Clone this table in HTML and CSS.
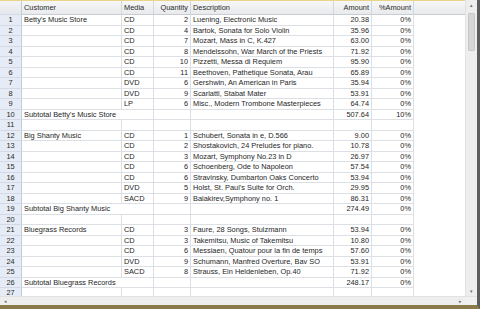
FILE: index.html
```html
<!DOCTYPE html>
<html>
<head>
<meta charset="utf-8">
<link rel="stylesheet" href="styles.css">
</head>
<body>
<div class="window">
  <div class="main">
    <div class="sheet">
      <div class="grid">
        <div class="c rn hd"></div><div class="c hd">Customer</div><div class="c hd">Media</div><div class="c hd r">Quantity</div><div class="c hd">Description</div><div class="c hd r">Amount</div><div class="c hd r">%Amount</div><div class="c hd blank"></div>

        <div class="c rn">1</div><div class="c">Betty's Music Store</div><div class="c">CD</div><div class="c r">2</div><div class="c">Luening, Electronic Music</div><div class="c r">20.38</div><div class="c r">0%</div><div class="c blank"></div>
        <div class="c rn">2</div><div class="c"></div><div class="c">CD</div><div class="c r">4</div><div class="c">Bartok, Sonata for Solo Violin</div><div class="c r">35.96</div><div class="c r">0%</div><div class="c blank"></div>
        <div class="c rn">3</div><div class="c"></div><div class="c">CD</div><div class="c r">7</div><div class="c">Mozart, Mass in C, K.427</div><div class="c r">63.00</div><div class="c r">0%</div><div class="c blank"></div>
        <div class="c rn">4</div><div class="c"></div><div class="c">CD</div><div class="c r">8</div><div class="c">Mendelssohn, War March of the Priests</div><div class="c r">71.92</div><div class="c r">0%</div><div class="c blank"></div>
        <div class="c rn">5</div><div class="c"></div><div class="c">CD</div><div class="c r">10</div><div class="c">Pizzetti, Messa di Requiem</div><div class="c r">95.90</div><div class="c r">0%</div><div class="c blank"></div>
        <div class="c rn">6</div><div class="c"></div><div class="c">CD</div><div class="c r">11</div><div class="c">Beethoven, Pathetique Sonata, Arau</div><div class="c r">65.89</div><div class="c r">0%</div><div class="c blank"></div>
        <div class="c rn">7</div><div class="c"></div><div class="c">DVD</div><div class="c r">6</div><div class="c">Gershwin, An American in Paris</div><div class="c r">35.94</div><div class="c r">0%</div><div class="c blank"></div>
        <div class="c rn">8</div><div class="c"></div><div class="c">DVD</div><div class="c r">9</div><div class="c">Scarlatti, Stabat Mater</div><div class="c r">53.91</div><div class="c r">0%</div><div class="c blank"></div>
        <div class="c rn">9</div><div class="c"></div><div class="c">LP</div><div class="c r">6</div><div class="c">Misc., Modern Trombone Masterpieces</div><div class="c r">64.74</div><div class="c r">0%</div><div class="c blank"></div>
        <div class="c rn">10</div><div class="c span2">Subtotal Betty's Music Store</div><div class="c r"></div><div class="c"></div><div class="c r">507.64</div><div class="c r">10%</div><div class="c blank"></div>
        <div class="c rn">11</div><div class="c"></div><div class="c"></div><div class="c r"></div><div class="c"></div><div class="c r"></div><div class="c r"></div><div class="c blank"></div>
        <div class="c rn">12</div><div class="c">Big Shanty Music</div><div class="c">CD</div><div class="c r">1</div><div class="c">Schubert, Sonata in e, D.566</div><div class="c r">9.00</div><div class="c r">0%</div><div class="c blank"></div>
        <div class="c rn">13</div><div class="c"></div><div class="c">CD</div><div class="c r">2</div><div class="c">Shostakovich, 24 Preludes for piano.</div><div class="c r">10.78</div><div class="c r">0%</div><div class="c blank"></div>
        <div class="c rn">14</div><div class="c"></div><div class="c">CD</div><div class="c r">3</div><div class="c">Mozart, Symphony No.23 in D</div><div class="c r">26.97</div><div class="c r">0%</div><div class="c blank"></div>
        <div class="c rn">15</div><div class="c"></div><div class="c">CD</div><div class="c r">6</div><div class="c">Schoenberg, Ode to Napoleon</div><div class="c r">57.54</div><div class="c r">0%</div><div class="c blank"></div>
        <div class="c rn">16</div><div class="c"></div><div class="c">CD</div><div class="c r">6</div><div class="c">Stravinsky, Dumbarton Oaks Concerto</div><div class="c r">53.94</div><div class="c r">0%</div><div class="c blank"></div>
        <div class="c rn">17</div><div class="c"></div><div class="c">DVD</div><div class="c r">5</div><div class="c">Holst, St. Paul's Suite for Orch.</div><div class="c r">29.95</div><div class="c r">0%</div><div class="c blank"></div>
        <div class="c rn">18</div><div class="c"></div><div class="c">SACD</div><div class="c r">9</div><div class="c">Balakirev,Symphony no. 1</div><div class="c r">86.31</div><div class="c r">0%</div><div class="c blank"></div>
        <div class="c rn">19</div><div class="c span2">Subtotal Big Shanty Music</div><div class="c r"></div><div class="c"></div><div class="c r">274.49</div><div class="c r">0%</div><div class="c blank"></div>
        <div class="c rn">20</div><div class="c"></div><div class="c"></div><div class="c r"></div><div class="c"></div><div class="c r"></div><div class="c r"></div><div class="c blank"></div>
        <div class="c rn">21</div><div class="c">Bluegrass Records</div><div class="c">CD</div><div class="c r">3</div><div class="c">Faure, 28 Songs, Stulzmann</div><div class="c r">53.94</div><div class="c r">0%</div><div class="c blank"></div>
        <div class="c rn">22</div><div class="c"></div><div class="c">CD</div><div class="c r">3</div><div class="c">Takemitsu, Music of Takemitsu</div><div class="c r">10.80</div><div class="c r">0%</div><div class="c blank"></div>
        <div class="c rn">23</div><div class="c"></div><div class="c">CD</div><div class="c r">6</div><div class="c">Messiaen, Quatour pour la fin de temps</div><div class="c r">57.60</div><div class="c r">0%</div><div class="c blank"></div>
        <div class="c rn">24</div><div class="c"></div><div class="c">DVD</div><div class="c r">9</div><div class="c">Schumann, Manfred Overture, Bav SO</div><div class="c r">53.91</div><div class="c r">0%</div><div class="c blank"></div>
        <div class="c rn">25</div><div class="c"></div><div class="c">SACD</div><div class="c r">8</div><div class="c">Strauss, Ein Heldenleben, Op.40</div><div class="c r">71.92</div><div class="c r">0%</div><div class="c blank"></div>
        <div class="c rn">26</div><div class="c span2">Subtotal Bluegrass Records</div><div class="c r"></div><div class="c"></div><div class="c r">248.17</div><div class="c r">0%</div><div class="c blank"></div>
        <div class="c rn">27</div><div class="c"></div><div class="c"></div><div class="c r"></div><div class="c"></div><div class="c r"></div><div class="c r"></div><div class="c blank"></div>
      </div>
    </div>
    <div class="vscroll">
      <div class="arrow">&#9652;</div>
      <div class="track"><div class="thumb"></div></div>
      <div class="arrow">&#9662;</div>
    </div>
  </div>
  <div class="hscroll">
    <div class="harrow">&#9666;</div>
    <div class="htrack"></div>
    <div class="harrow">&#9656;</div>
    <div class="corner"></div>
  </div>
</div>
</body>
</html>
```

FILE: styles.css
```css
html, body {
  margin: 0;
  padding: 0;
  background: #ffffff;
}
body {
  width: 480px;
  height: 309px;
  overflow: hidden;
  font-family: "Liberation Sans", Arial, sans-serif;
  font-size: 7.4px;
  color: #262626;
}
.window {
  width: 480px;
  height: 309px;
  display: flex;
  flex-direction: column;
  box-sizing: border-box;
  border-bottom: 4px solid #8a7a4a;
  border-right: 3px solid #5d5d5d;
  background: #ffffff;
}
.main {
  flex: 1;
  display: flex;
  min-height: 0;
}
.sheet {
  flex: 1;
  overflow: hidden;
}
.grid {
  display: grid;
  grid-template-columns: 22px 100px 32px 37px 143px 38px 42px 1fr;
  grid-template-rows: 14px repeat(27, 10.5px);
  border-top: 1px solid #e8d58a;
}
.c {
  box-sizing: border-box;
  border-right: 1px solid #dcdfe3;
  border-bottom: 1px solid #dcdfe3;
  padding: 0 2px;
  white-space: nowrap;
  overflow: visible;
  line-height: 10px;
}
.c.r {
  text-align: right;
}
.c.hd {
  background: linear-gradient(#f7f7f7, #e9eaec);
  border-bottom: 1px solid #c9cdd3;
  border-right: 1px solid #d3d6da;
  line-height: 13px;
  color: #2a2a2a;
}
.c.rn {
  background: #e6ecf5;
  border-right: 1px solid #c2cbd9;
  border-bottom: 1px solid #d3dae6;
  text-align: center;
  color: #2a2a2a;
}
.c.rn.hd {
  background: linear-gradient(#f4f4f4, #e4e7ec);
}
.c.blank {
  border-right: none;
  border-bottom: none;
  background: #ffffff;
}
.c.hd.blank {
  background: linear-gradient(#f7f7f7, #e9eaec);
  border-bottom: 1px solid #c9cdd3;
}
.c.span2 {
  grid-column: span 2;
}
.vscroll {
  width: 11px;
  display: flex;
  flex-direction: column;
  background: #eeeeee;
  border-left: 1px solid #e2e2e2;
}
.arrow {
  height: 10px;
  font-size: 5px;
  line-height: 10px;
  text-align: center;
  color: #6a6a6a;
}
.track {
  flex: 1;
  padding: 3px 2px 0 2px;
}
.thumb {
  height: 36px;
  background: #d6d6d6;
  border: 1px solid #c8c8c8;
  border-radius: 1px;
}
.hscroll {
  height: 8px;
  display: flex;
  background: #eeeeee;
  border-top: 1px solid #e2e2e2;
}
.harrow {
  width: 10px;
  font-size: 5px;
  line-height: 8px;
  text-align: center;
  color: #6a6a6a;
}
.htrack {
  flex: 1;
}
.corner {
  width: 12px;
  background: #f0f0f0;
}
```
